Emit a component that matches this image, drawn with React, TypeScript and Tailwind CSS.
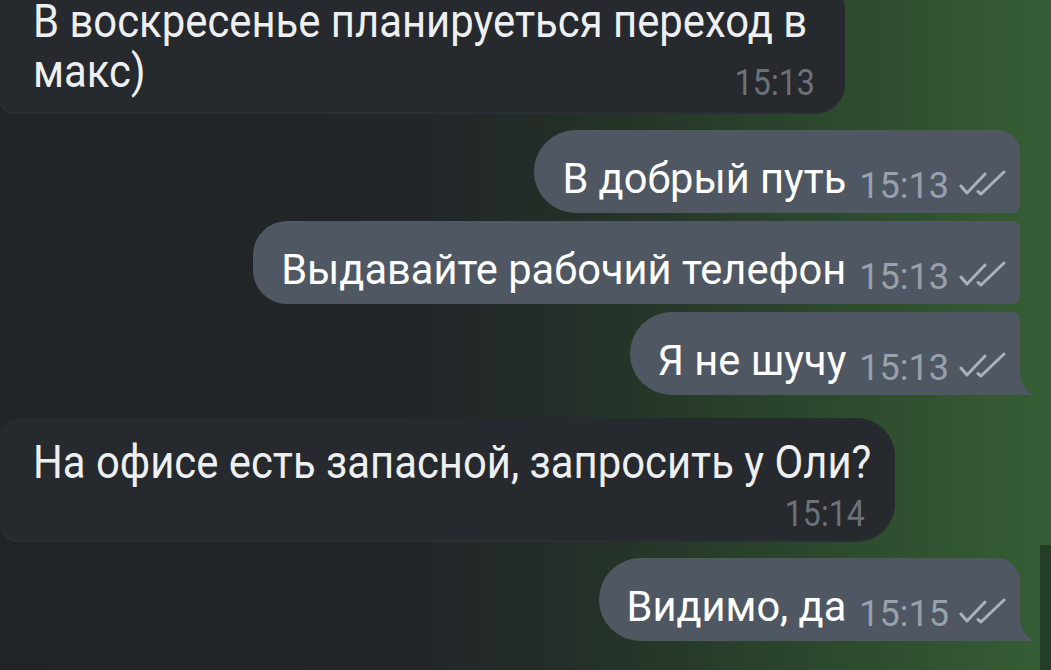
import React from "react";

function Checks() {
    return (
        <svg width="48" height="28" viewBox="0 0 48 28" fill="none" stroke="#a7b2bc" strokeWidth="3" strokeLinecap="round" strokeLinejoin="round">
            <path d="M2 16 L8 23 L26 4" />
            <path d="M19 21.5 L22 24 L45 2" />
        </svg>
    );
}

function Tail({ color }: { color: string }) {
    return (
        <svg className="absolute right-[-13px] bottom-0" width="14" height="32" viewBox="0 0 14 32">
            <path d="M0 0 C1 18 5 27 14 32 L0 32 Z" fill={color} />
        </svg>
    );
}

interface OutProps {
    text: string;
    time: string;
    corners: string;
    tail?: boolean;
}

function Outgoing({ text, time, corners, tail }: OutProps) {
    return (
        <div className="flex justify-end pr-[31px]">
            <div className={`relative flex items-start h-[83px] pl-[28px] pr-[13px] pt-[28px] bg-[#4f5862] ${corners}`}>
                <span className="text-[41.6px] leading-[42px] text-white whitespace-nowrap">{text}</span>
                <span className="ml-[13px] mt-[10px] text-[36px] leading-[36px] text-[#98a2ac]">{time}</span>
                <span className="ml-[10px] mt-[12px] flex">
                    <Checks />
                </span>
                {tail && <Tail color="#4f5862" />}
            </div>
        </div>
    );
}

export default function App() {
    return (
        <div
            className="relative w-[1051px] h-[670px] overflow-hidden bg-[linear-gradient(to_right,#212427_0%,#222629_40%,#243028_56%,#2b462c_76%,#365e35_100%)]"
            style={{ fontFamily: "Roboto, 'Noto Sans', sans-serif" }}
        >
            <div className="flex flex-col">
                {/* incoming, cut off at top */}
                <div className="w-[845px] -mt-[20px] pt-[20px] pl-[33px] pr-[30px] pb-[11px] bg-[#26292d] rounded-r-[30px] rounded-bl-[14px] shadow-[0_2px_0_#2b2e32]">
                    <div className="text-[47px] leading-[42px] text-[#eeeff0] whitespace-nowrap">
                        <span className="inline-block origin-left scale-x-[0.89]">В воскресенье планируеться переход в</span>
                    </div>
                    <div className="mt-[4px] flex justify-between items-start">
                        <span className="text-[47px] leading-[50px] text-[#eeeff0] inline-block origin-left scale-x-[0.89]">макс)</span>
                        <span className="mt-[19px] text-[36px] leading-[36px] text-[#6d7278] inline-block origin-right scale-x-[0.89]">15:13</span>
                    </div>
                </div>

                <div className="mt-[18px] flex flex-col gap-[8px]">
                    <Outgoing text="В добрый путь" time="15:13" corners="rounded-l-[42px] rounded-tr-[22px] rounded-br-[8px]" />
                    <Outgoing text="Выдавайте рабочий телефон" time="15:13" corners="rounded-l-[34px] rounded-r-[8px]" />
                    <Outgoing text="Я не шучу" time="15:13" corners="rounded-l-[42px] rounded-tr-[8px]" tail />
                </div>

                <div className="mt-[23px] w-[895px] pt-[19px] pl-[33px] pr-[30px] pb-[8px] bg-[#26292d] rounded-r-[38px] rounded-l-[18px] shadow-[0_2px_0_#2b2e32]">
                    <div className="text-[47px] leading-[50px] text-[#eeeff0] whitespace-nowrap">
                        <span className="inline-block origin-left scale-x-[0.89]">На офисе есть запасной, запросить у Оли?</span>
                    </div>
                    <div className="mt-[9px] flex justify-end">
                        <span className="text-[36px] leading-[36px] text-[#6d7278] inline-block origin-right scale-x-[0.89]">15:14</span>
                    </div>
                </div>

                <div className="mt-[18px]">
                    <Outgoing text="Видимо, да" time="15:15" corners="rounded-l-[42px] rounded-tr-[24px]" tail />
                </div>
            </div>
            <div className="absolute right-0 bottom-0 w-[11px] h-[125px] bg-[#243d26]" />
        </div>
    );
}
